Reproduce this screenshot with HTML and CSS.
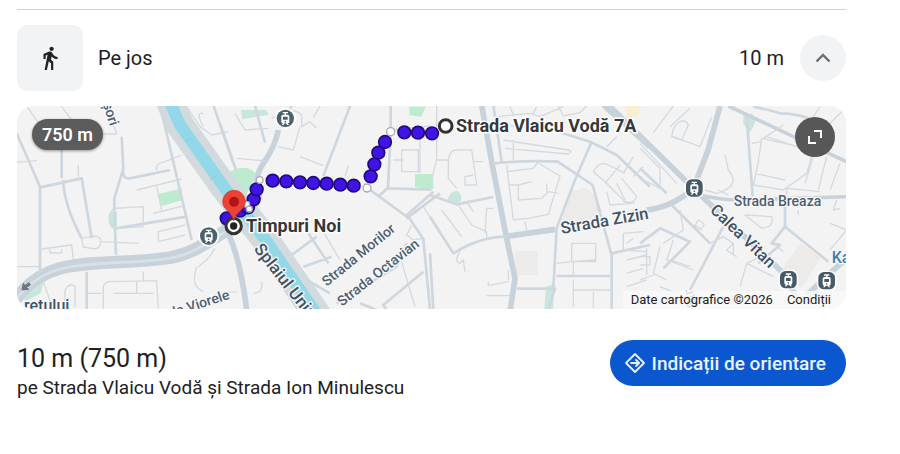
FILE: index.html
```html
<!DOCTYPE html>
<html lang="ro">
<head>
<meta charset="utf-8">
<meta name="viewport" content="width=device-width, initial-scale=1">
<title>Pe jos</title>
<link rel="stylesheet" href="styles.css">
</head>
<body>
<main class="route">
  <header class="mode">
    <span class="mode-icon">
      <svg viewBox="0 0 24 24" width="26" height="26" aria-hidden="true"><path fill="currentColor" d="M13.5 5.5c1.1 0 2-.9 2-2s-.9-2-2-2-2 .9-2 2 .9 2 2 2zM9.8 8.9L7 23h2.1l1.8-8 2.1 2v6h2v-7.5l-2.1-2 .6-3C14.8 12 16.8 13 19 13v-2c-1.9 0-3.5-1-4.3-2.4l-1-1.6c-.4-.6-1-1-1.7-1-.3 0-.5.1-.8.1L6 8.3V13h2V9.6l1.8-.7z"/></svg>
    </span>
    <span class="mode-name">Pe jos</span>
    <span class="mode-time">10 m</span>
    <button class="collapse" type="button" aria-label="Restrânge">
      <svg viewBox="0 0 24 24" width="24" height="24" aria-hidden="true"><path fill="none" stroke="currentColor" stroke-width="2.4" d="M5.5 15.5L12 9l6.500 6.500"/></svg>
    </button>
  </header>

  <section class="map">
    <svg class="map-art" viewBox="21 18 2487 609" preserveAspectRatio="xMidYMid slice">
      <defs>
        <g id="tram">
          <circle r="32" fill="#fff" opacity=".8"/>
          <circle r="26" fill="#4a626e"/>
          <path d="M-8-19H8v4H2v4h5q5 0 5 5V10q0 5-5 5l4 5H6L2 15h-4l-4 5h-5l4-5q-5 0-5-5V-6q0-5 5-5h5v-4h-6z" fill="#fff"/>
          <path d="M-7-5H7V4H-7z" fill="#4a626e"/>
          <circle cy="10" r="2.500" fill="#4a626e"/>
        </g>
        <g id="tram-stop">
          <rect x="-30" y="-30" width="60" height="60" rx="20" fill="#fff" opacity=".8"/>
          <rect x="-25" y="-26" width="50" height="52" rx="17" fill="#465a67"/>
          <path d="M-8-19H8v4H2v4h5q5 0 5 5V10q0 5-5 5l4 5H6L2 15h-4l-4 5h-5l4-5q-5 0-5-5V-6q0-5 5-5h5v-4h-6z" fill="#fff"/>
          <path d="M-7-5H7V4H-7z" fill="#465a67"/>
          <circle cy="10" r="2.500" fill="#465a67"/>
        </g>
      </defs>
      <rect x="0" y="0" width="2600" height="700" fill="#f4f3f4"/>

      <!-- parks and squares -->
      <path class="park" d="M442 283l74-18v36l-60 17z"/>
      <path class="park pale" d="M296 345q10-15 25-8v52q-18 0-25-20zM40 590l62-45-10 35-45 24zM692 30h75l10 14-80 14z"/>
      <path class="park" d="M655 218q50-30 80 0l-8 42-32 35-40-45z"/>
      <path class="park" d="M1198 20h50l-15 30-35-4zM1215 222h55v46l-55-7z"/>
      <path class="park pale" d="M1312 300q8-28 28-27 17 8 14 30l-20 8zM1608 560l25-8-4 76h-26zM2200 42h28l8 24-16 32-20-25z"/>
      <path class="plot" d="M1680 275l45-12 40 30-5 60-80 20-22-15zM1515 452h68v74h-68zM2372 430l60 44-58 90-70-42z"/>
      <path fill="#f8efd0" d="M1845 15h50l-10 34-34 5z"/>

      <!-- canal and embankments -->
      <path class="bank" d="M478 0L510 75 645 265 760 410 925 650"/>
      <path class="canal" d="M478 0L510 75 645 265 760 410 925 650"/>
      <path class="seam" d="M525 125l22-12M600 240l24-16"/>

      <!-- west -->
      <g>
        <path class="avenue" d="M15 600Q70 527 150 505C250 480 350 492 480 473 570 455 590 420 680 375"/>
        <path class="avenue-line" d="M15 602Q70 529 150 507C250 482 350 494 480 475 570 457 590 422 680 377"/>
        <path class="street" d="M20 100L90 260V515M155 110V235M90 262l125-27 30 180M160 240q0 70 55 175M450 15l35 150 60 255M335 110l5 95-27 90v45l5 125M340 205q-5 32 20 30l120-25M318 385l212-35M230 515v115"/>
        <path class="lane" d="M20 187l60-5M50 18l35 50M155 20l30 40M250 102h70l-30-85M205 195v35M380 270l135-33M440 210q-5-20 25-25l50-20M440 260l15 70M430 340l90-22M400 320v60l-80 5q-28-10-20-45 5-16 30-16zM215 415l35-7q25 0 22 20t-22 18l-30-5zM95 447l90-12 5 45M120 447v12h35v-12M275 425l110 5M445 425v-30l80-20M445 425l80-20M20 500h75M100 545l30 85M165 630v-60q15-25 30-10v60M280 630v-70q5-18 30-15l130-3 5 85M230 580h45M310 580h120M380 545v35M400 515v30M560 500q-20 60 20 75M580 80q-25-45 0-40M530 20l40 60 35 25 50-10M565 500l30-25 20-30"/>
        <path class="street" d="M610 15l60 175"/>
      </g>

      <!-- centre -->
      <g transform="translate(630 0)">
        <path class="road" d="M175 90Q165 140 130 190T120 300M10 370q50 90 70 260"/>
        <path class="street" d="M0 70l48 140M105 18l30 110M215 15l-30 70M390 18l-80 210M440 262l130 95 40 60 20 210M512 18v80l-8 165-30 28M504 265l130 4M555 350l85-75M470 630l-50-20M350 610l180-110 30-70M500 630l-10-15 120-100M215 465l75-55M250 500l85-30M265 400l60 90M330 580l-70-40"/>
        <path class="lane" d="M45 40l30 50 70-5M50 175l90 8M155 55q60-40 90-10v35l25-15 20 20M175 140l45 10 20-70M240 170l70 27M385 195l-10 35M300 18l-20 35M545 150h50v65h-50zM510 90l120-12M600 80v140M520 180h30M610 320l50 80M575 375l-15 30 20 15 25-5M540 470l45 150M0 580l50-5M100 580q30 0 25-35M360 480l-50-85"/>
        <path class="street" d="M560 355L660 280"/>
      </g>

      <!-- east of centre -->
      <g transform="translate(1260 0)">
        <path class="road" d="M155 15l30 170 45 230 25 120-15 100M225 410l150-22M520 15l140 125"/>
        <path class="street" d="M0 285l80 28 110-22M0 350l70 110q80-50 160-50M0 460l10 170M193 190q100-10 190-5l105 70 55 205M485 125l-50 115-55 145-10 180M190 15l25 170M350 85l130 40 80 40 100 95M380 528h160M545 630V460l115-25M260 566h115l-20 60"/>
        <path class="lane" d="M20 18v160l-15 60M75 150h50l15 105h-35v-25l25-5M75 150q-20 5-20 40v45l25 30M20 180h35M130 185h30M215 75l135 10M220 120l195 30q15 5 0 12l-190-17M250 120v60M230 195l20 165 45-5 60-12 35-115-75-45M240 255h25v45l70-5 20-20 30 5M265 255l40-10M230 215l80-10 15-20M350 250v25M285 365l5 28M200 50l100-10 30 10 70-30M240 20l10 25M320 20l-10 20M385 18l15 30 50-10 20-20M425 430h72v55h-72zM430 485v40M380 490l45-5 70-5M430 540v80M430 570h110M490 575v50M90 455q-20 30 0 35l10-10 5 35M175 545v12l60-12M170 587h70M235 510v30M85 315l40 60 45 20v25M35 330l60 80M110 305l20 30M190 325h-20l-5 75M490 215q20-35 45-20l50 25M490 215l35 30 60 60 30 5M525 250l45-55M530 275l10 40 65-5M560 250l25 50M575 235l45 55q-10 25-40 15M580 400l60-5M590 430l20-15M580 400v50l70 5M590 480l60-15M590 520l50-15M590 560l60-20M600 630l50-40M560 110l-30 30M610 170l-30 50M640 200l-30 30M500 330h15"/>
      </g>

      <!-- east -->
      <g transform="translate(1890 0)">
        <path class="road" d="M-110 0L160 265 420 510 470 590M240 18l-35 130-40 105M160 265Q100 320 20 330M500 585l130-120"/>
        <path class="road thin" d="M180 285q60 15 120 15l160-5 170-5M265 18l170 80 190 90"/>
        <path class="street" d="M320 50l18 240M0 205l80 75M95 315l115 115M250 380l-100 190M435 300v80l130 105M435 380l-40 50 25 5-65 55M0 430l60-45 90 40-80 80M340 20q50 10 80 20 90 0 165 60"/>
        <path class="lane" d="M100 18l-60 80M100 85q30-40 45-10l-20 45-30-10zM150 25l-60 55M215 50l-35 90-80-30M0 130l110 120M0 145l60 60v60l-40-20M255 165l10 45q40 50-35 70l-35-10M235 270l30 15M365 115q-10 80-25 140l90 15 70-50 20-70zM520 170l-25 80M560 170l-25 100M600 190l-30 80M495 110l25 60M380 110l120 40M430 75l-60 40M440 295v-30l100 10M540 20l-40 60M620 20l-60 60M315 345l80 5q10 30-30 35zM175 360l18 12-10 17-18-12zM120 330l10 60-60 40M210 430l40-20 30 20v30M280 430l-20 20 30 20M300 560l20-70 40-20M320 490l80 40M570 370l50 20M570 450l50-60M590 300l-10 30 20-5M475 330v15M0 470h30v25H0M60 440l-20 80 40 20M90 480l60 20M0 540l40-15M60 560l50 20M100 420l-20 60 80 30M20 445v80M400 430l30 25M345 220l90 20M335 130l30-5"/>
      </g>

      <!-- arrow at the end of the avenue -->
      <path d="M36 570l4-20 5 7 12-9 4 6-12 9 7 5z" fill="#6a747c" stroke="#6a747c" stroke-width="3"/>

      <!-- street names -->
      <g class="names">
        <text transform="translate(278 12) rotate(72)" font-size="42">șori</text>
        <text x="42" y="632" class="strong" font-size="48">retului</text>
        <text transform="translate(494 650) rotate(-18)" font-size="42">la Viorele</text>
        <text transform="translate(730 447) rotate(52)" class="strong" font-size="51">Splaiul Unirii</text>
        <text transform="translate(950 560) rotate(-39)" font-size="42">Strada Morilor</text>
        <text transform="translate(996 620) rotate(-38)" font-size="42">Strada Octavian</text>
        <text transform="translate(1655 402) rotate(-10)" class="strong" font-size="50">Strada Zizin</text>
        <text transform="translate(2098 333) rotate(44)" class="strong" font-size="49">Calea Vitan</text>
        <text x="2171" y="318" font-size="42">Strada Breaza</text>
        <text transform="translate(2068 640) rotate(-106)" font-size="42">. Str</text>
        <text x="2465" y="488" class="place" font-size="48">Ka</text>
      </g>

      <use href="#tram" x="596" y="408"/>
      <use href="#tram" x="826" y="55"/>
      <use href="#tram-stop" x="2053" y="264"/>
      <use href="#tram-stop" x="2335" y="539"/>
      <use href="#tram-stop" x="2450" y="542"/>

      <!-- walking path -->
      <g class="dots">
        <circle cx="650" cy="355" r="19"/><circle cx="690" cy="332" r="19"/><circle cx="714" cy="322" r="19"/>
        <circle cx="731" cy="298" r="19"/><circle cx="740" cy="268" r="19"/>
        <circle cx="788" cy="242" r="19"/><circle cx="829" cy="244" r="19"/><circle cx="870" cy="247" r="19"/><circle cx="910" cy="249" r="19"/><circle cx="950" cy="251" r="19"/><circle cx="991" cy="254" r="19"/><circle cx="1031" cy="257" r="19"/>
        <circle cx="1082" cy="229" r="19"/><circle cx="1093" cy="193" r="19"/><circle cx="1105" cy="158" r="19"/><circle cx="1125" cy="126" r="19"/>
        <circle cx="1183" cy="97" r="19"/><circle cx="1224" cy="98" r="19"/><circle cx="1266" cy="100" r="19"/>
      </g>
      <g class="bends">
        <circle cx="710" cy="313" r="9"/><circle cx="718" cy="327" r="9"/><circle cx="749" cy="240" r="10"/><circle cx="1071" cy="264" r="12"/><circle cx="1142" cy="95" r="12"/>
      </g>
      <circle cx="671" cy="378" r="23" fill="#fff" stroke="#333" stroke-width="9"/>
      <circle cx="671" cy="378" r="11" fill="#222"/>
      <path d="M671 363C667 334 638 330 638 305a34 34 0 0 1 68 0C706 330 676 334 671 363z" fill="#ea4335" stroke="#d33426" stroke-width="2"/>
      <circle cx="672" cy="305" r="15" fill="#b31412"/>
      <circle cx="1307" cy="78" r="19" fill="#fff" stroke="#333" stroke-width="9"/>
      <g class="stops">
        <text x="708" y="397" font-size="54">Timpuri Noi</text>
        <text x="1338" y="97" font-size="54">Strada Vlaicu Vodă 7A</text>
      </g>
    </svg>
    <span class="distance">750 m</span>
    <button class="expand" type="button" aria-label="Extinde harta">
      <svg viewBox="0 0 24 24" width="24" height="24" aria-hidden="true"><path fill="none" stroke="currentColor" stroke-width="2" d="M11 6h7v7M6 11v7h7"/></svg>
    </button>
    <div class="credits"><span>Date cartografice ©2026</span><a href="#conditii">Condiții</a></div>
  </section>

  <footer class="summary">
    <div>
      <h2 class="total">10 m (750 m)</h2>
      <p class="via">pe Strada Vlaicu Vodă și Strada Ion Minulescu</p>
    </div>
    <button class="directions" type="button">
      <svg viewBox="0 0 24 24" width="22" height="22" aria-hidden="true"><g fill="none" stroke="currentColor" stroke-width="2" stroke-linejoin="round"><path d="M12 2.200L21.800 12 12 21.800 2.200 12z"/><path d="M7 12h9M12.500 8l4 4-4 4"/></g></svg>
      Indicații de orientare
    </button>
  </footer>
</main>
</body>
</html>
```
FILE: styles.css
```css
* { box-sizing: border-box; }

body {
  margin: 0;
  background: #fff;
  color: #202124;
  font-family: Roboto, "Liberation Sans", sans-serif;
}

button {
  border: 0;
  padding: 0;
  font: inherit;
  cursor: pointer;
}

.route {
  margin: 9px 54px 0 17px;
  border-top: 1px solid #d2d3d5;
  padding-top: 15px;
}

.mode {
  display: flex;
  align-items: center;
  font-size: 20px;
}

.mode-icon {
  display: grid;
  place-items: center;
  width: 66px;
  height: 66px;
  margin-right: 15px;
  border-radius: 10px;
  background: #f1f3f4;
}

.mode-name { flex: 1; }

.collapse {
  display: grid;
  place-items: center;
  width: 46px;
  height: 46px;
  margin-left: 16px;
  border-radius: 50%;
  background: #f1f3f4;
  color: #6b6e72;
}

.map {
  position: relative;
  margin-top: 15px;
  border-radius: 16px;
  overflow: hidden;
}

.map-art {
  display: block;
  width: 100%;
  height: auto;
}

.map-art path { stroke-linejoin: round; }
.park { fill: #bdebd0; }
.pale { fill: #c9e6dc; }
.plot { fill: #edebe9; }

.bank, .canal, .seam, .avenue, .avenue-line, .road, .street, .lane { fill: none; }
.bank { stroke: #d2dadd; stroke-width: 84; }
.canal { stroke: #93d8e8; stroke-width: 36; }
.seam { stroke: #84c9dc; stroke-width: 3; }
.avenue { stroke: #c8d2da; stroke-width: 38; }
.avenue-line { stroke: #d9e1e8; stroke-width: 8; }
.road { stroke: #c8d2da; stroke-width: 17; }
.thin { stroke-width: 11; }
.street { stroke: #ced7de; stroke-width: 8; }
.lane { stroke: #d2dae0; stroke-width: 4; }

.names text {
  fill: #4c5f70;
  stroke: #f7f7f8;
  stroke-width: 8;
  stroke-linejoin: round;
  paint-order: stroke;
  font-weight: 500;
}
.names .strong { fill: #3f5365; }
.names .place { fill: #3d7fb8; }

.stops text {
  fill: #35383b;
  stroke: #fff;
  stroke-width: 9;
  stroke-linejoin: round;
  paint-order: stroke;
  font-weight: 700;
}

.dots { fill: #4013e6; stroke: #22087d; stroke-width: 5; }
.bends { fill: #fff; stroke: #aaa; stroke-width: 4; }

.distance {
  position: absolute;
  top: 13px;
  left: 15px;
  padding: 0 10px;
  border-radius: 16px;
  background: #5c5c5c;
  box-shadow: 0 1px 3px rgba(0, 0, 0, .4);
  color: #fff;
  font-size: 18px;
  font-weight: 600;
  line-height: 31px;
}

.expand {
  position: absolute;
  top: 11px;
  right: 11px;
  display: grid;
  place-items: center;
  width: 40px;
  height: 40px;
  border-radius: 50%;
  background: #575757;
  color: #fff;
}

.credits {
  position: absolute;
  right: 0;
  bottom: 0;
  display: flex;
  gap: 14px;
  padding: 0 15px 0 8px;
  background: rgba(248, 248, 248, .85);
  color: #222;
  font-family: Roboto, "Liberation Sans", sans-serif;
  font-size: 13px;
  line-height: 18px;
}

.credits a {
  color: inherit;
  text-decoration: none;
}

.summary {
  display: flex;
  align-items: flex-start;
  justify-content: space-between;
  gap: 16px;
  margin-top: 31px;
}

.total {
  margin: 3px 0 0;
  font-size: 25px;
  font-weight: 400;
  line-height: 32px;
}

.via {
  margin: 0;
  font-size: 19px;
  line-height: 26px;
}

.directions {
  display: flex;
  align-items: center;
  gap: 6px;
  height: 46px;
  padding: 0 20px 0 14px;
  border-radius: 23px;
  background: #0b57d0;
  color: #e8f4ff;
  font-size: 19px;
  font-weight: 500;
  white-space: nowrap;
}
```
